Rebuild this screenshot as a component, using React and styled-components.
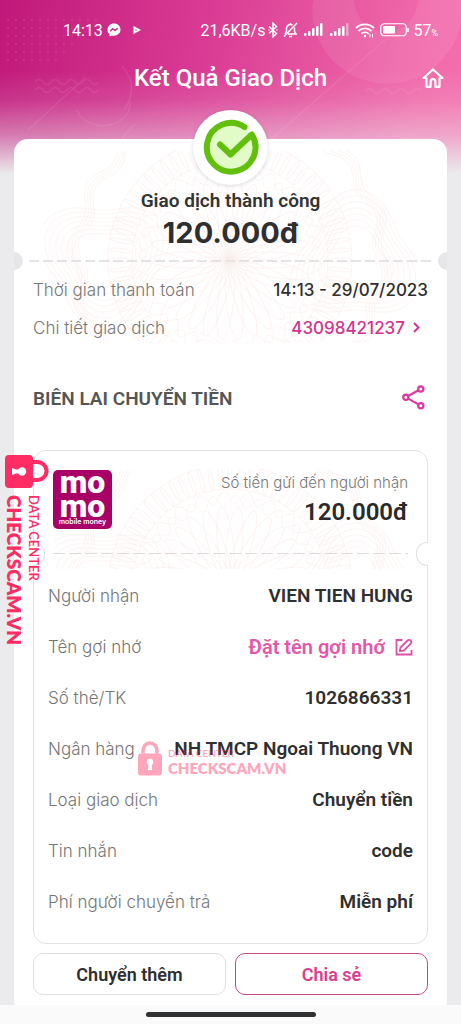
import React from "react";
import styled, { createGlobalStyle } from "styled-components";

const sans = `Roboto, "Liberation Sans", sans-serif`;
const inter = `Inter, Roboto, sans-serif`;
const pink = "#d1358f";

const GlobalStyle = createGlobalStyle`
  * {
    box-sizing: border-box;
  }

  body {
    margin: 0;
    background: #ebebed;
    font-family: ${sans};
  }

  button {
    padding: 0;
    border: 0;
    background: none;
    color: inherit;
    font: inherit;
    cursor: pointer;
  }

  svg {
    display: block;
    flex: none;
  }
`;

const Page = styled.div`
  position: relative;
  display: flex;
  flex-direction: column;
  min-height: 100vh;
  background:
    linear-gradient(
      to bottom,
      rgba(235, 235, 237, 0) 70px,
      rgba(235, 235, 237, 0.12) 100px,
      rgba(235, 235, 237, 0.45) 135px,
      #ebebed 174px
    ),
    linear-gradient(100deg, #c0187a 0, #d93a93 32%, #f16bab 68%, #ff7ab6 100%);
`;

const Decor = styled.svg`
  position: absolute;
  top: 0;
  left: 0;
  width: 100%;
  height: 140px;
`;

const StatusBar = styled.div`
  position: relative;
  display: flex;
  align-items: center;
  justify-content: space-between;
  height: 60px;
  padding: 0 23px 0 63px;
  color: white;
  font-size: 16px;
`;

const StatusGroup = styled.div`
  display: flex;
  align-items: center;
  gap: ${props => props.gap};
`;

const Percent = styled.span`
  small {
    font-size: 9px;
  }
`;

const Header = styled.header`
  position: relative;
  display: grid;
  grid-template-columns: 22px 1fr 22px;
  align-items: center;
  height: 36px;
  padding: 0 17px;
  color: white;
`;

const Title = styled.h1`
  grid-column: 2;
  margin: 0;
  font-size: 24px;
  font-weight: 500;
  line-height: 36px;
  text-align: center;
`;

const Ticket = styled.main`
  position: relative;
  flex: 1;
  margin: 43px 14px 0;
  padding: 0 19px 10px;
  border-radius: 14px 14px 2px 2px;
  background: white;
`;

const TicketPattern = styled.svg`
  position: absolute;
  top: 12px;
  left: 30px;
  width: calc(100% - 60px);
  height: 192px;
`;

const Summary = styled.section`
  position: relative;
  display: flex;
  flex-direction: column;
  align-items: center;
  height: 121px;
`;

const Badge = styled.div`
  margin-top: -29px;
  border-radius: 50%;
  background: white;
  box-shadow: 0 1px 4px rgba(0, 0, 0, 0.15);
`;

const Outcome = styled.p`
  margin: 3px 0 0;
  color: #333;
  font-size: 19px;
  font-weight: 600;
  line-height: 26px;
`;

const Amount = styled.p`
  margin: 0;
  color: #2f2f2f;
  font-family: ${inter};
  font-size: 29px;
  font-weight: 700;
  line-height: 38px;
`;

const dashes = (color, size, on, off) => `
  height: ${size}px;
  background: repeating-linear-gradient(
    to right,
    ${color} 0,
    ${color} ${on}px,
    transparent ${on}px,
    transparent ${off}px
  );
`;

const TearLine = styled.div`
  position: relative;
  margin: 0 -4px;
  ${dashes("#e4e4e6", 2, 10, 14)}

  &::before,
  &::after {
    content: "";
    position: absolute;
    top: -8px;
    width: 9px;
    height: 18px;
    background: #e6e6e8;
  }

  &::before {
    left: -15px;
    border-radius: 0 9px 9px 0;
  }

  &::after {
    right: -15px;
    border-radius: 9px 0 0 9px;
  }
`;

const List = styled.dl`
  position: relative;
  margin: 0;
  padding: ${props => props.padding};
`;

const Row = styled.div`
  display: flex;
  align-items: center;
  justify-content: space-between;
  height: ${props => props.height};

  dt {
    color: #767676;
    font-family: ${inter};
    font-size: 17px;
    font-weight: 300;
  }

  dd {
    margin: 0;
    color: #2f2f2f;
    font-size: 19px;
    font-weight: 600;
    white-space: nowrap;
  }
`;

const Meta = styled(Row)`
  dd {
    font-family: ${inter};
    font-size: 17px;
    font-weight: 500;
  }
`;

const DetailLink = styled.a`
  display: flex;
  align-items: center;
  gap: 8px;
  padding-right: 8px;
  color: ${pink};
  text-decoration: none;
`;

const SectionHead = styled.div`
  display: flex;
  align-items: center;
  justify-content: space-between;
  height: 104px;

  h2 {
    margin: 0;
    color: #555;
    font-size: 19px;
    font-weight: 600;
  }
`;

const Receipt = styled.section`
  position: relative;
  border: 1px solid #e2e2e4;
  border-radius: 13px;
  padding: 19px 14px 16px;
`;

const ReceiptPattern = styled.svg`
  position: absolute;
  top: 18px;
  left: 20px;
  width: calc(100% - 40px);
  height: 100px;
`;

const ReceiptHead = styled.div`
  position: relative;
  display: flex;
  justify-content: space-between;
  height: 83px;
  padding: 0 5px;
`;

const Logo = styled.div`
  display: flex;
  flex-direction: column;
  align-items: center;
  width: 59px;
  height: 59px;
  border-radius: 5px;
  background: #a90068;
  color: white;
  font-size: 32px;
  font-weight: 900;
  line-height: 24px;

  small {
    font-family: ${inter};
    font-size: 7px;
    font-weight: 600;
    line-height: 7px;
  }
`;

const Sent = styled.div`
  color: #2a2a2a;
  font-size: 24px;
  font-weight: 600;
  line-height: 32px;
  text-align: right;

  span {
    display: block;
    color: #777;
    font-family: ${inter};
    font-size: 15px;
    font-weight: 300;
    line-height: 26px;
  }
`;

const Perforation = styled.div`
  position: relative;
  margin: 0 5px;
  ${dashes("#dededf", 1, 12, 16)}

  &::before,
  &::after {
    content: "";
    position: absolute;
    top: -11px;
    width: 11px;
    height: 22px;
    border: 1px solid #e2e2e4;
    background: white;
  }

  &::before {
    left: -20px;
    border-left: 0;
    border-radius: 0 11px 11px 0;
  }

  &::after {
    right: -20px;
    border-right: 0;
    border-radius: 11px 0 0 11px;
  }
`;

const Rename = styled.button`
  display: flex;
  align-items: center;
  gap: 10px;
  color: #e458a8;
  font-size: 20px;
`;

const Actions = styled.div`
  display: grid;
  grid-template-columns: 1fr 1fr;
  gap: 9px;
  margin-top: 9px;
`;

const Action = styled.button`
  && {
    height: 42px;
    border: 1px solid ${props => (props.$primary ? "#c0498f" : "#dfdfe1")};
    border-radius: 10px;
    color: ${props => (props.$primary ? "#dc3b90" : "#2f2f2f")};
    font-size: 18px;
    font-weight: 600;
  }
`;

const HomeBar = styled.footer`
  display: flex;
  justify-content: center;
  height: 19px;
  padding-top: 7px;
  background: #fafafa;

  &::before {
    content: "";
    width: 170px;
    height: 5px;
    border-radius: 3px;
    background: #303233;
  }
`;

const SideMark = styled.div`
  position: absolute;
  top: 453px;
  left: 4px;
  color: #ff2d63;
  font-family: Lato, sans-serif;
  font-weight: 700;
`;

const SideText = styled.div`
  display: flex;
  flex-direction: column;
  gap: 2px;
  writing-mode: vertical-rl;
  margin-top: 7px;
  font-size: 19px;
  font-weight: 800;
  line-height: 20px;

  small {
    font-size: 13px;
    font-weight: 600;
    line-height: 16px;
  }
`;

const InlineMark = styled.div`
  position: absolute;
  top: 741px;
  left: 137px;
  display: flex;
  align-items: flex-end;
  gap: 5px;
  color: #ff2d63;
  font-family: Lato, sans-serif;
  font-size: 15px;
  font-weight: 800;
  line-height: 15px;
  opacity: 0.42;
  pointer-events: none;

  small {
    display: block;
    font-size: 10px;
    font-weight: 600;
    line-height: 15px;
  }
`;

const range = count => Array.from({ length: count }, (_, i) => i);

function wave(cx, cy, radius, depth, lobes) {
  const points = range(361).map(deg => {
    const a = (deg * Math.PI) / 180;
    const r = radius + depth * Math.sin(a * lobes);
    return `${(cx + r * Math.cos(a)).toFixed(1)} ${(cy + r * Math.sin(a)).toFixed(1)}`;
  });
  return `M${points.join("L")}Z`;
}

const Guilloche = ({ cx, cy }) => (
  <g fill="none" stroke="#e79a88" strokeWidth="0.6" opacity="0.17">
    {range(30).map(i => (
      <ellipse
        key={i}
        cx={cx + 40}
        cy={cy}
        rx="40"
        ry="8"
        transform={`rotate(${i * 12} ${cx} ${cy})`}
      />
    ))}
    <path d={wave(cx, cy, 86, 6, 24)} />
    <path d={wave(cx, cy, 90, -6, 24)} />
    <circle cx={cx} cy={cy} r="98" />
    <circle cx={cx} cy={cy} r="122" />
    {range(72).map(i => (
      <ellipse
        key={i}
        cx={cx + 110}
        cy={cy}
        rx="12"
        ry="2"
        transform={`rotate(${i * 5} ${cx} ${cy})`}
      />
    ))}
    {[-1, 1].map(side =>
      range(7).map(i => (
        <path
          key={`${side}${i}`}
          d={wave(cx + side * 126, cy, 30 + i * 5, side * (4 + i), 3)}
        />
      ))
    )}
    {range(4).map(i => (
      <path key={i} d={wave(cx, cy, 148 + i * 3, 5, 16)} />
    ))}
  </g>
);

const Messenger = () => (
  <svg width="14" height="14" viewBox="0 0 14 14">
    <path
      fill="white"
      d="M7 0.5C3.2 0.5 0.5 3.2 0.5 6.7c0 2 .8 3.500 2.100 4.700V13.500l2.100-1.100c.7.200 1.500.300 2.300.300 3.800 0 6.500-2.700 6.500-6.100S10.800.5 7 .5z"
    />
    <path fill="none" stroke="#cf3389" strokeWidth="1.500" d="M3.200 8.200 5.700 5.700 8 7.500l2.800-2.300" />
  </svg>
);

const Play = () => (
  <svg width="8" height="8" viewBox="0 0 8 8">
    <path fill="white" d="M0.500 0 8 4 0.500 8z" />
    <path fill="#db4b98" d="M2.500 3 4.500 4 2.500 5z" />
  </svg>
);

const Home = () => (
  <svg width="22" height="20" viewBox="0 0 22 20" fill="none" stroke="white" strokeWidth="2.200">
    <path strokeLinejoin="round" d="M4.500 10H1.500L11 1.500 20.500 10H17.500" />
    <path strokeLinejoin="round" d="M4.500 9.500V18.800H8.600V13.500a2.400 2.400 0 0 1 4.800 0V18.800H17.500V9.500" />
  </svg>
);

const Bluetooth = () => (
  <svg width="10" height="16" viewBox="0 0 10 16" fill="none" stroke="white" strokeWidth="1.500">
    <path d="M1 4.500 8.500 11.500 5 14.800V1.200L8.500 4.500 1 11.500" />
    <path d="M0.500 8h1M8.500 8h1" />
  </svg>
);

const Muted = () => (
  <svg width="15" height="16" viewBox="0 0 15 16" fill="none" stroke="white" strokeWidth="1.500">
    <path d="M3.500 9.500V6.500a4 4 0 0 1 6-3.500M11.500 5.500v4l1.500 2.500H5M2 12l1.500-2.500M6 14.500h3M7.500 2.500V1M1 14.500 14 1" />
  </svg>
);

const Signal = ({ weak }) => (
  <svg width="21" height="14" viewBox="0 0 21 14" fill="white">
    {[3, 5, 8, 10, 13].map((h, i) => (
      <rect
        key={h}
        x={i * 4 + 1}
        y={13 - h}
        width="2.500"
        height={h}
        rx="1"
        opacity={weak && i === 4 ? 0.4 : 1}
      />
    ))}
  </svg>
);

const Wifi = () => (
  <svg width="20" height="15" viewBox="0 0 20 15" fill="none" stroke="white" strokeWidth="1.800">
    <path d="M1 5a13 13 0 0 1 18 0M3.500 8a9.500 9.500 0 0 1 13 0M6.300 10.800a5.500 5.500 0 0 1 7.500 0" />
    <circle cx="10" cy="13" r="1.200" fill="white" stroke="none" />
    <path strokeWidth="1" d="M15 11v3.500M17.500 11v3.500" />
  </svg>
);

const Battery = () => (
  <svg width="29" height="14" viewBox="0 0 29 14">
    <rect x="0.750" y="0.750" width="25.500" height="12" rx="3.500" fill="none" stroke="white" strokeWidth="1.200" />
    <rect x="3" y="3" width="12" height="7.500" rx="1" fill="white" />
    <path d="M28 5v4" stroke="white" strokeWidth="1.500" />
  </svg>
);

const Success = () => (
  <svg width="75" height="75" viewBox="0 0 75 75" role="img" aria-label="Thành công">
    <circle cx="37.500" cy="37.500" r="24" fill="#e2fcc8" />
    <path
      fill="none"
      stroke="#62bf0b"
      strokeWidth="6"
      strokeLinecap="round"
      strokeLinejoin="round"
      d="M51.500 17A24.300 24.300 0 1 0 58.800 24.500L37.500 44.500 27 34.500"
    />
  </svg>
);

const Chevron = () => (
  <svg width="7" height="11" viewBox="0 0 7 11" fill="none" stroke={pink} strokeWidth="2">
    <path d="M1 1 5.500 5.500 1 10" />
  </svg>
);

const ShareIcon = () => (
  <svg width="26" height="26" viewBox="0 0 26 26" fill="none" stroke="#db38a0" strokeWidth="2.200">
    <circle cx="3.800" cy="12.300" r="2.600" />
    <circle cx="18.800" cy="4" r="2.600" />
    <circle cx="18.800" cy="20.700" r="2.600" />
    <path d="M6.200 11 16.500 5.300M6.200 13.600 16.500 19.400" />
  </svg>
);

const Pencil = () => (
  <svg width="18" height="18" viewBox="0 0 18 18" fill="none" stroke="#e04fa2" strokeWidth="1.800">
    <path d="M7.500 2H1.500V16.500H16.500V12" />
    <path strokeLinejoin="round" d="M4.800 13.200 5.500 9.500 12.500 2.500a2.200 2.200 0 0 1 3.200 3.200L8.700 12.600z" />
  </svg>
);

const SideLock = () => (
  <svg width="45" height="35" viewBox="0 0 45 35">
    <path fill="none" stroke="#ff2d63" strokeWidth="4" d="M29 9h4a9 8.500 0 0 1 0 18h-4" />
    <rect x="1" y="2" width="28" height="33" rx="4" fill="#ff2d63" />
    <circle cx="18" cy="18.500" r="4.200" fill="white" />
    <path fill="white" d="M17 16.500 12 16.500 8 15v7l4-1.500 5 0z" />
  </svg>
);

const InlineLock = () => (
  <svg width="26" height="35" viewBox="0 0 26 35">
    <path fill="none" stroke="#ff2d63" strokeWidth="3.500" d="M6 12.500V9.500a7 7.500 0 0 1 14 0v3" />
    <rect x="1" y="12.500" width="24" height="22" rx="3" fill="#ff2d63" />
    <circle cx="13" cy="21" r="3.200" fill="white" />
    <path fill="white" d="M11.500 21 11 29h4L14.500 21z" />
  </svg>
);

const fields = [
  ["Người nhận", "VIEN TIEN HUNG"],
  [
    "Tên gợi nhớ",
    <Rename type="button">
      Đặt tên gợi nhớ <Pencil />
    </Rename>
  ],
  ["Số thẻ/TK", "1026866331"],
  ["Ngân hàng", "NH TMCP Ngoai Thuong VN"],
  ["Loại giao dịch", "Chuyển tiền"],
  ["Tin nhắn", "code"],
  ["Phí người chuyển trả", "Miễn phí"]
];

export default function App() {
  return (
    <Page>
      <GlobalStyle />
      <Decor viewBox="0 0 461 140" preserveAspectRatio="xMaxYMin slice">
        <path fill="white" opacity="0.080" d="M313 0a72 71 0 0 0 148 20V0h-43a32 32 0 0 1-64 0z" />
        <g fill="none" stroke="white" strokeWidth="1.500" opacity="0.080">
          <path d="M385 40 270 140M86 77 28 130M122 66q18 20 2 44M135 124 122 138" />
          <path d="M35 82q4-5 8 0t8 0 8 0 8 0 8 0 8 0 8 0 8 0M35 90q4-5 8 0t8 0 8 0 8 0 8 0 8 0 8 0 8 0" />
          <path d="M365 91q4-5 8 0t8 0 8 0 8 0 8 0 8 0 8 0" />
          <path d="M77 110a26 20 0 0 0 52-10" />
        </g>
        <g fill="#ff7ab6" opacity="0.220">
          {range(6).map(row =>
            range(12 - row).map(col => (
              <circle key={`${row}${col}`} cx={8 + col * 8} cy={20 + row * 8} r="1" />
            ))
          )}
        </g>
      </Decor>

      <StatusBar>
        <StatusGroup gap="4px">
          14:13
          <Messenger />
          <StatusGroup gap="0">
            <svg width="8" height="8" />
            <Play />
          </StatusGroup>
        </StatusGroup>
        <StatusGroup gap="5px">
          <StatusGroup gap="3px">
            21,6KB/s
            <Bluetooth />
          </StatusGroup>
          <Muted />
          <Signal />
          <Signal weak />
          <Wifi />
          <StatusGroup gap="4px">
            <Battery />
            <Percent>
              57<small>%</small>
            </Percent>
          </StatusGroup>
        </StatusGroup>
      </StatusBar>

      <Header>
        <Title>Kết Quả Giao Dịch</Title>
        <button type="button" aria-label="Trang chủ">
          <Home />
        </button>
      </Header>

      <Ticket>
        <TicketPattern viewBox="0 0 373 192" preserveAspectRatio="xMidYMid slice">
          <Guilloche cx={186} cy={109} />
        </TicketPattern>

        <Summary>
          <Badge>
            <Success />
          </Badge>
          <Outcome>Giao dịch thành công</Outcome>
          <Amount>120.000đ</Amount>
        </Summary>
        <TearLine />

        <List padding="9px 0 0">
          <Meta height="38px">
            <dt>Thời gian thanh toán</dt>
            <dd>14:13 - 29/07/2023</dd>
          </Meta>
          <Meta height="37px">
            <dt>Chi tiết giao dịch</dt>
            <dd>
              <DetailLink href="#detail">
                43098421237 <Chevron />
              </DetailLink>
            </dd>
          </Meta>
        </List>

        <SectionHead>
          <h2>BIÊN LAI CHUYỂN TIỀN</h2>
          <button type="button" aria-label="Chia sẻ biên lai">
            <ShareIcon />
          </button>
        </SectionHead>

        <Receipt>
          <ReceiptPattern viewBox="0 0 355 100" preserveAspectRatio="xMidYMid slice">
            <Guilloche cx={177} cy={118} />
          </ReceiptPattern>
          <ReceiptHead>
            <Logo>
              <span>mo</span>
              <span>mo</span>
              <small>mobile money</small>
            </Logo>
            <Sent>
              <span>Số tiền gửi đến người nhận</span>
              120.000đ
            </Sent>
          </ReceiptHead>
          <Perforation />
          <List padding="16px 0 0">
            {fields.map(([label, value]) => (
              <Row key={label} height="51px">
                <dt>{label}</dt>
                <dd>{value}</dd>
              </Row>
            ))}
          </List>
        </Receipt>

        <Actions>
          <Action type="button">Chuyển thêm</Action>
          <Action type="button" $primary>
            Chia sẻ
          </Action>
        </Actions>
      </Ticket>

      <HomeBar />

      <SideMark>
        <SideLock />
        <SideText>
          <small>DATA CENTER</small>
          <span>CHECKSCAM.VN</span>
        </SideText>
      </SideMark>
      <InlineMark>
        <InlineLock />
        <div>
          <small>DATA CENTER</small>
          CHECKSCAM.VN
        </div>
      </InlineMark>
    </Page>
  );
}
